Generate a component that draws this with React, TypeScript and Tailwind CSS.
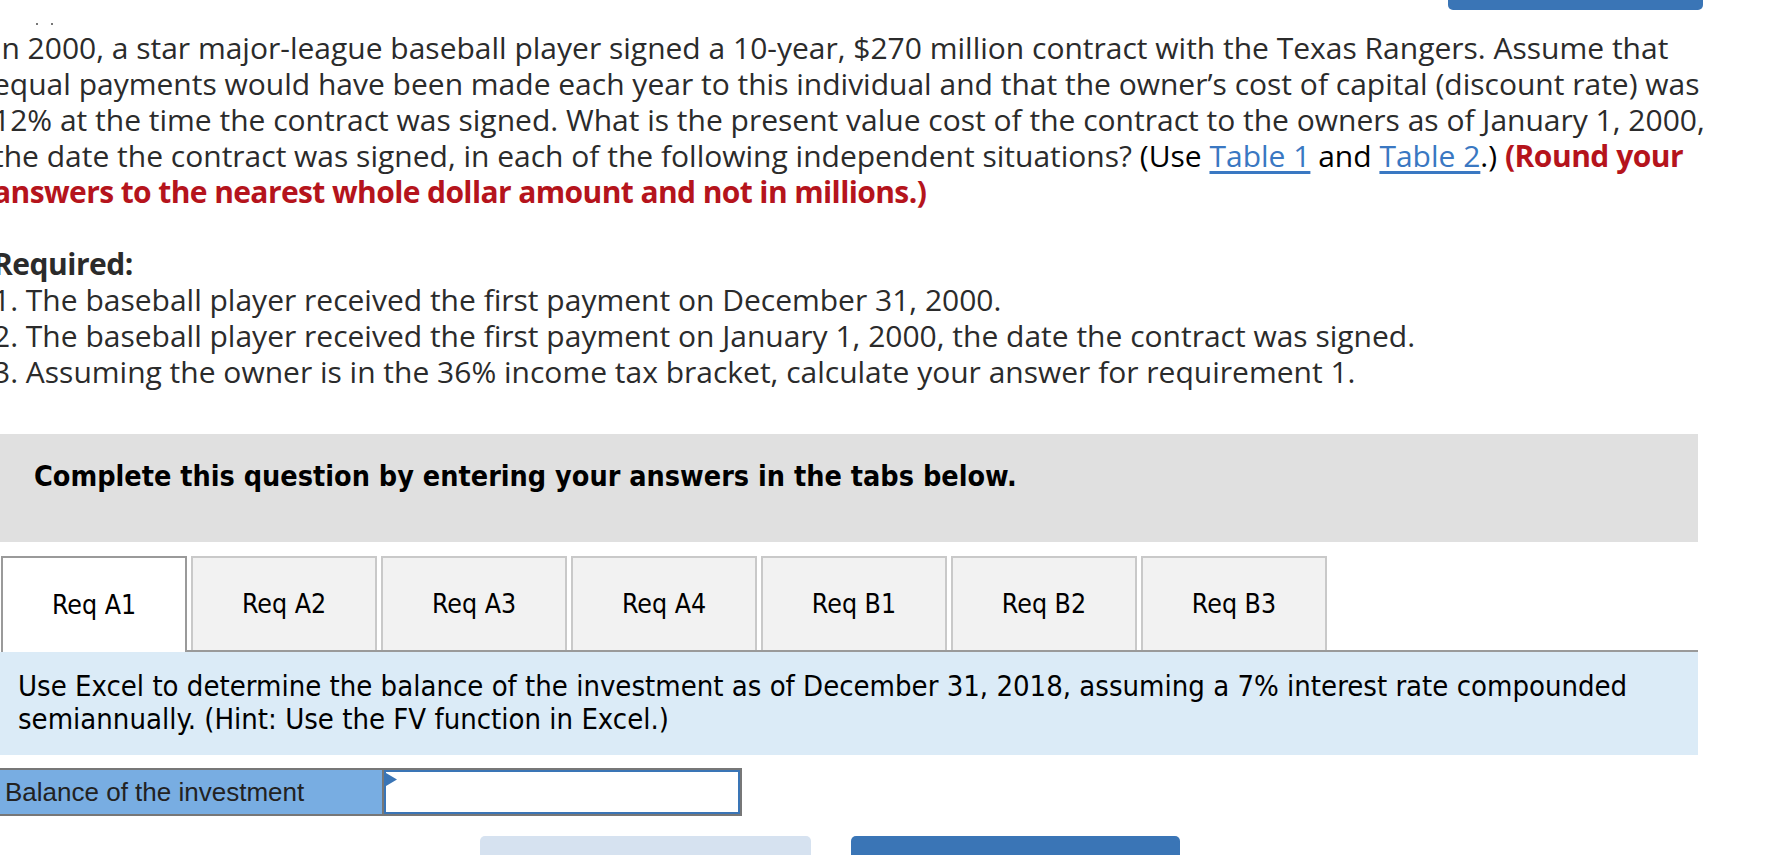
const body = { fontFamily: '"Open Sans", "Liberation Sans", sans-serif' };
const tahoma = { fontFamily: '"DejaVu Sans Condensed", "DejaVu Sans", sans-serif' };
const arial = { fontFamily: '"Liberation Sans", Arial, sans-serif' };

const tabs = ["Req A1", "Req A2", "Req A3", "Req A4", "Req B1", "Req B2", "Req B3"];

const Tabs = () => {
  return (
    <div className="flex w-[1698px] mt-[14px]">
      <div className="w-[1px] border-b-2 border-transparent" />
      {tabs.map((t, i) =>
        i === 0 ? (
          <div
            key={t}
            className="w-[186px] h-[96px] bg-white border-2 border-b-0 border-[#9a9a9a] flex items-center justify-center text-[26.5px] text-black"
            style={tahoma}
          >
            {t}
          </div>
        ) : (
          <div key={t} className="pl-[4px] border-b-2 border-[#9a9a9a]">
            <div
              className="w-[186px] h-[94px] bg-[#f2f2f2] border-2 border-b-0 border-[#c9c9c9] flex items-center justify-center text-[26.5px] text-black"
              style={tahoma}
            >
              {t}
            </div>
          </div>
        )
      )}
      <div className="flex-1 border-b-2 border-[#9a9a9a]" />
    </div>
  );
};

export default function App() {
  return (
    <div className="w-[1773px] h-[855px] overflow-hidden bg-white text-[#2b2b2b]">
      <div className="flex h-[30px] justify-between">
        <div className="flex gap-[13px] ml-[36px] mt-[23px] h-[3px]">
          <span className="w-[2px] h-[2px] bg-[#777]" />
          <span className="w-[2px] h-[2px] bg-[#777]" />
        </div>
        <div className="w-[255px] h-[10px] bg-[#3a75b6] rounded-b-[5px] mr-[70px]" />
      </div>

      <div className="overflow-hidden w-full">
        <div className="-ml-[7px] text-[30px] leading-[36px] whitespace-nowrap" style={body}>
          <p>
            In 2000, a star major-league baseball player signed a 10-year, $270 million contract with the Texas Rangers. Assume that
            <br />
            equal payments would have been made each year to this individual and that the owner’s cost of capital (discount rate) was
            <br />
            12% at the time the contract was signed. What is the present value cost of the contract to the owners as of January 1, 2000,
            <br />
            the date the contract was signed, in each of the following independent situations?{" "}
            <span className="text-black">(Use </span>
            <a className="text-[#3a78c2] underline underline-offset-4">Table 1</a>
            <span className="text-black"> and </span>
            <a className="text-[#3a78c2] underline underline-offset-4">Table 2</a>
            <span className="text-black">.)</span>{" "}
            <b className="text-[#b5141c] tracking-[-0.5px]">(Round your</b>
            <br />
            <b className="text-[#b5141c] tracking-[-0.6px]">answers to the nearest whole dollar amount and not in millions.)</b>
          </p>
          <p className="mt-[36px]">
            <b className="tracking-[-0.5px]">Required:</b>
            <br />
            1. The baseball player received the first payment on December 31, 2000.
            <br />
            2. The baseball player received the first payment on January 1, 2000, the date the contract was signed.
            <br />
            3. Assuming the owner is in the 36% income tax bracket, calculate your answer for requirement 1.
          </p>
        </div>
      </div>

      <div className="w-[1698px] h-[108px] mt-[44px] bg-[#e0e0e0] pl-[34px] pt-[26px]">
        <p className="text-[28.5px] leading-[34px] font-bold text-black" style={tahoma}>
          Complete this question by entering your answers in the tabs below.
        </p>
      </div>

      <Tabs />

      <div className="w-[1698px] h-[103px] bg-[#dbebf7] pl-[18px] pt-[18px]">
        <p className="text-[29px] leading-[33px] text-black whitespace-nowrap" style={tahoma}>
          Use Excel to determine the balance of the investment as of December 31, 2018, assuming a 7% interest rate compounded
          <br />
          semiannually. (Hint: Use the FV function in Excel.)
        </p>
      </div>

      <div className="flex w-[742px] h-[48px] mt-[13px] border-y-2 border-r-2 border-[#777]">
        <div
          className="w-[384px] bg-[#78ade2] border-r-2 border-[#777] flex items-center pl-[5px] text-[26px] text-[#222]"
          style={arial}
        >
          Balance of the investment
        </div>
        <div className="relative flex-1 border-2 border-[#3a75b6] bg-white">
          <svg className="absolute left-0 top-[1px]" width="11" height="13" viewBox="0 0 11 13">
            <polygon points="0,0 11,6.5 0,13" fill="#3a75b6" />
          </svg>
        </div>
      </div>

      <div className="flex mt-[20px] ml-[480px] gap-[40px]">
        <div className="w-[331px] h-[40px] bg-[#d6e2f0] rounded-t-[5px]" />
        <div className="w-[329px] h-[40px] bg-[#3a75b6] rounded-t-[5px]" />
      </div>
    </div>
  );
}
